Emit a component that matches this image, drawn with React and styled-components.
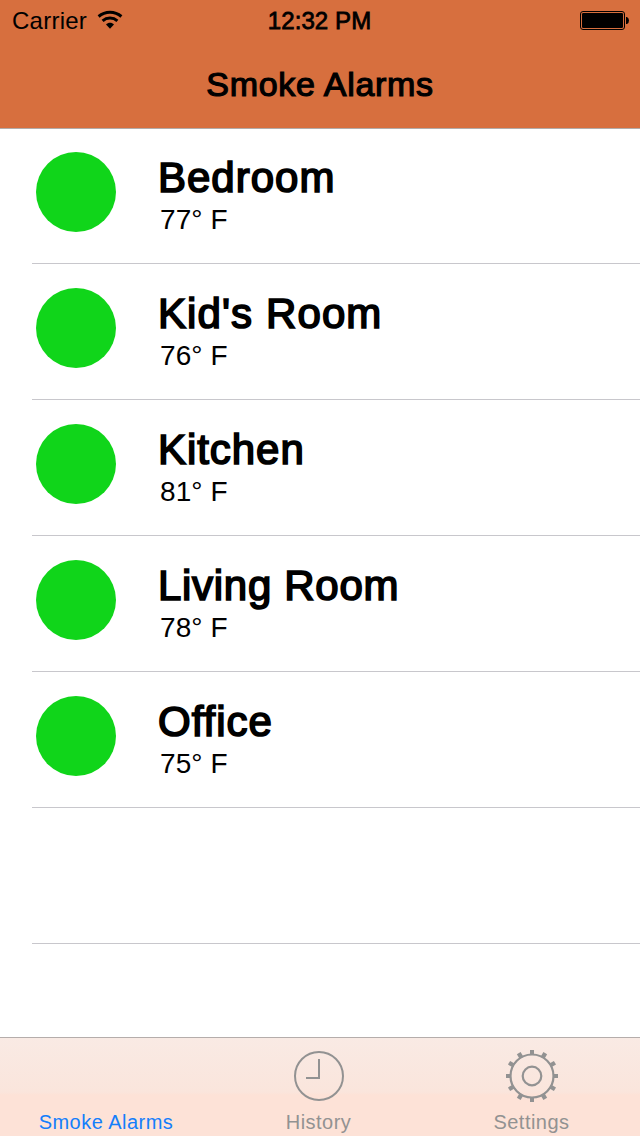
import React from "react";
import styled, { createGlobalStyle } from "styled-components";

const GlobalStyle = createGlobalStyle`
  * { box-sizing: border-box; }
  html, body { margin: 0; padding: 0; background: #fff; }
  body { font-family: "Liberation Sans", Arial, Helvetica, sans-serif; color: #000; }
`;

const Screen = styled.div`
  width: 640px;
  height: 1136px;
  display: flex;
  flex-direction: column;
  background: #fff;
  overflow: hidden;
`;

const Header = styled.header`
  flex: none;
  height: 129px;
  background: #d76f3e;
  border-bottom: 1px solid #b2aba8;
`;

const StatusBar = styled.div`
  height: 40px;
  display: grid;
  grid-template-columns: 1fr auto 1fr;
  align-items: center;
  padding: 1px 11px 0 12px;
  font-size: 24px;
  line-height: 40px;

  svg { margin-bottom: 2px; }
`;

const Carrier = styled.div`
  display: flex;
  align-items: center;
  gap: 10px;
  letter-spacing: 0.25px;
`;

const Time = styled.div`
  padding-right: 2px;
  letter-spacing: 0.1px;
  -webkit-text-stroke: 0.8px #000;
`;

const BatterySlot = styled.div`
  display: flex;
  justify-content: flex-end;
`;

const Title = styled.h1`
  margin: 0;
  height: 88px;
  text-align: center;
  font-size: 34px;
  font-weight: 400;
  line-height: 88px;
  letter-spacing: 0.68px;
  -webkit-text-stroke: 1.2px #000;
`;

const List = styled.ul`
  flex: 1;
  min-height: 0;
  margin: 0;
  padding: 0 0 0 32px;
  list-style: none;
  overflow: hidden;
`;

const Row = styled.li`
  height: 136px;
  display: flex;
  padding: 23px 0 0 4px;
  border-bottom: ${(p) => (p.$last ? "none" : "1px solid #c8c7cc")};
  &:first-child { height: 135px; }
  & + & { padding-top: 24px; }
`;

const Dot = styled.span`
  width: 80px;
  height: 80px;
  flex: none;
  border-radius: 50%;
  background: #10d51a;
`;

const Labels = styled.div`
  margin: 3px 0 0 42px;
`;

const Room = styled.div`
  font-size: 42px;
  line-height: 46px;
  white-space: nowrap;
  letter-spacing: ${(p) => p.$spacing}px;
  -webkit-text-stroke: 1.7px #000;
`;

const Temp = styled.div`
  margin-left: 2px;
  font-size: 28px;
  line-height: 38px;
  letter-spacing: 0.1px;
`;

const TabBar = styled.nav`
  height: 99px;
  flex: none;
  display: grid;
  grid-template-columns: 212px 213px 213px;
  border-top: 1px solid #b5adab;
  background: linear-gradient(#f9eae4 0, #fae5dc 54px, #fde2d7 57px, #fde2d7 100%);
`;

const Tab = styled.div`
  display: flex;
  flex-direction: column;
  align-items: center;
  color: ${(p) => (p.$active ? "#147efb" : "#929292")};
  font-size: 20px;
  line-height: 24px;
  letter-spacing: 0.48px;
`;

const IconBox = styled.div`
  width: 52px;
  height: 52px;
  margin: 12px 0 8px;
  svg { display: block; }
`;

const Wifi = () => (
  <svg width="26" height="20" viewBox="0 0 26 20" fill="none" stroke="#000">
    <path d="M1.6 6.5C8.200.9 17.800.9 24.400 6.500" strokeWidth="3" />
    <path d="M5.600 10.800C9.800 7.200 16.200 7.200 20.400 10.800" strokeWidth="3" />
    <path d="M9 14.400C11.200 12.300 14.800 12.300 17 14.400L13 18.700Z" fill="#000" stroke="none" />
  </svg>
);

const Battery = () => (
  <svg width="49" height="20" viewBox="0 0 49 20">
    <rect x="0.500" y="1.500" width="44" height="18" rx="2.500" fill="none" stroke="#000" />
    <rect x="2" y="3" width="41" height="15" rx="1.200" />
    <path d="M46 7H47Q49 8 49 10.500T47 14H46Z" />
  </svg>
);

const ClockIcon = () => (
  <svg width="52" height="52" viewBox="0 0 52 52" fill="none" stroke="#929292" strokeWidth="2">
    <circle cx="26" cy="26" r="24" />
    <path d="M26 9V28H13" />
  </svg>
);

const GearIcon = () => (
  <svg width="52" height="52" viewBox="0 0 52 52" fill="none" stroke="#929292" strokeWidth="2.2">
    <circle cx="26" cy="26" r="21.500" />
    <circle cx="26" cy="26" r="9.300" />
    {Array.from({ length: 12 }, (_, i) => (
      <path
        key={i}
        d={i % 3 === 0 ? "M26 0V5" : "M26 -0.500V5"}
        strokeWidth={i % 3 === 0 ? 4 : 4.3}
        transform={`rotate(${i * 30} 26 26)`}
      />
    ))}
  </svg>
);

const rooms = [
  { name: "Bedroom", temp: "77° F", spacing: 1 },
  { name: "Kid's Room", temp: "76° F", spacing: 1.1 },
  { name: "Kitchen", temp: "81° F", spacing: 0.95 },
  { name: "Living Room", temp: "78° F", spacing: 0.7 },
  { name: "Office", temp: "75° F", spacing: 1 },
];

export default function App() {
  return (
    <Screen>
      <GlobalStyle />
      <Header>
        <StatusBar>
          <Carrier>Carrier<Wifi /></Carrier>
          <Time>12:32 PM</Time>
          <BatterySlot><Battery /></BatterySlot>
        </StatusBar>
        <Title>Smoke Alarms</Title>
      </Header>
      <List>
        {rooms.map((r) => (
          <Row key={r.name}>
            <Dot />
            <Labels>
              <Room $spacing={r.spacing}>{r.name}</Room>
              <Temp>{r.temp}</Temp>
            </Labels>
          </Row>
        ))}
        <Row />
        <Row $last />
      </List>
      <TabBar>
        <Tab $active><IconBox />Smoke Alarms</Tab>
        <Tab><IconBox><ClockIcon /></IconBox>History</Tab>
        <Tab><IconBox><GearIcon /></IconBox>Settings</Tab>
      </TabBar>
    </Screen>
  );
}
